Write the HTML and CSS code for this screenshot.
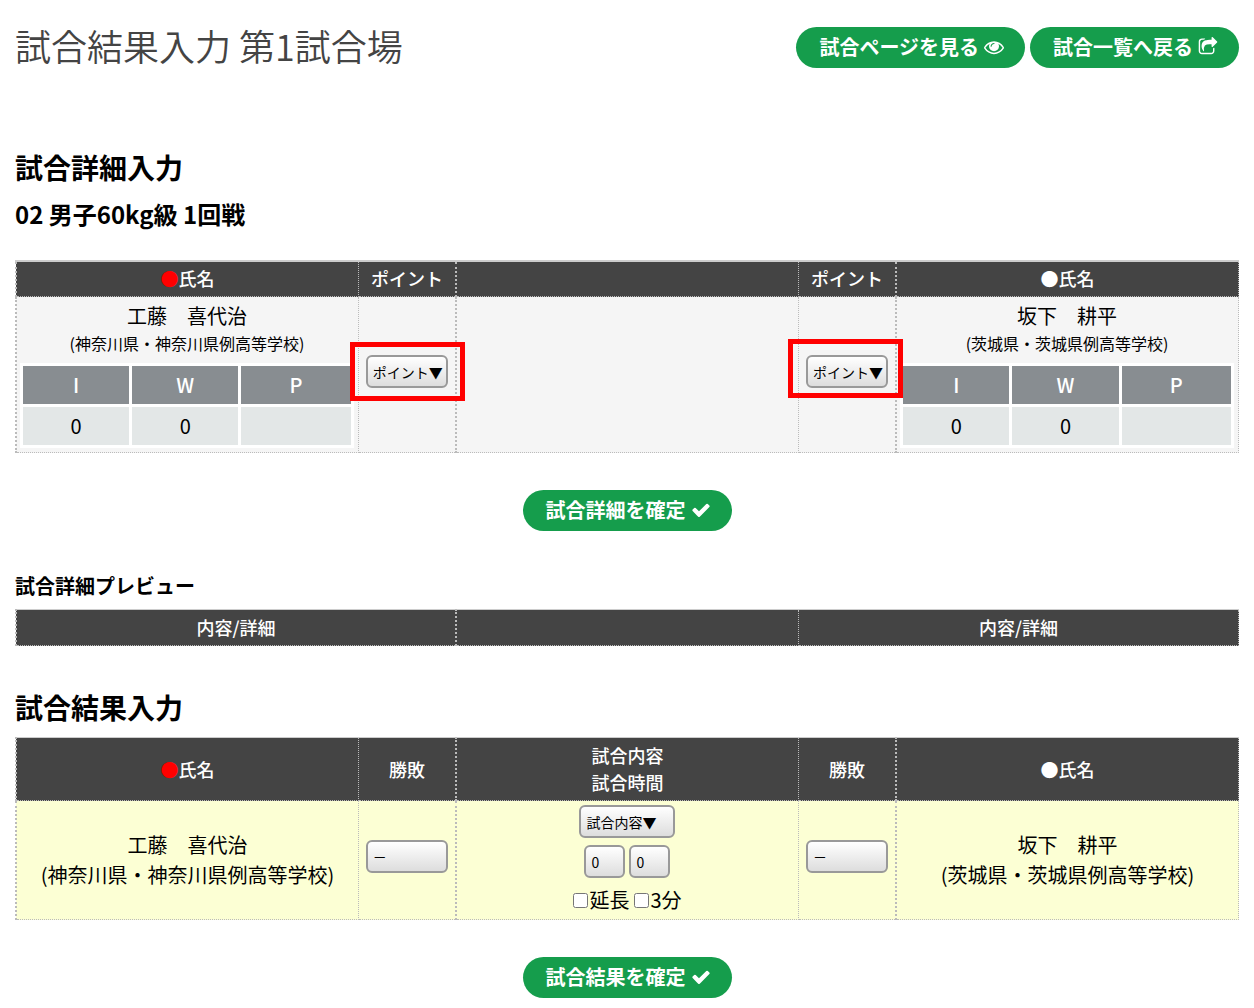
FILE: index.html
```html
<!DOCTYPE html>
<html lang="ja">
<head>
    <meta charset="UTF-8">
    <meta name="viewport" content="width=device-width, initial-scale=1.0">
    <title>試合結果入力 第1試合場</title>
    <link rel="stylesheet" href="styles.css">
</head>
<body>

    <!-- Page Header -->
    <header class="page-header">
        <h1>試合結果入力 第1試合場</h1>
        <nav class="header-links">
            <a href="#match" class="pill">試合ページを見る
                <svg class="icon" viewBox="0 0 1792 1792" aria-hidden="true"><path d="M1664 960q-152-236-381-353 61 104 61 225 0 185-131.500 316.500t-316.500 131.500-316.500-131.500-131.500-316.500q0-121 61-225-229 117-381 353 133 205 333.500 326.500t434.500 121.500 434.500-121.500 333.500-326.500zm-720-384q0-20-14-34t-34-14q-125 0-214.500 89.500t-89.500 214.500q0 20 14 34t34 14 34-14 14-34q0-86 61-147t147-61q20 0 34-14t14-34zm848 384q0 34-20 69-140 230-376.500 368.500t-499.500 138.500-499.500-139-376.500-368q-20-35-20-69t20-69q140-229 376.500-368t499.500-139 499.500 139 376.500 368q20 35 20 69z"/></svg>
            </a>
            <a href="#list" class="pill">試合一覧へ戻る
                <svg class="icon" viewBox="0 0 1792 1792" aria-hidden="true"><path d="M1472 989v259q0 119-84.500 203.500t-203.500 84.500h-832q-119 0-203.500-84.500t-84.500-203.500v-832q0-119 84.500-203.500t203.500-84.500h255q13 0 22.500 9.500t9.500 22.500q0 27-26 32-77 26-133 60-10 4-16 4h-112q-66 0-113 47t-47 113v832q0 66 47 113t113 47h832q66 0 113-47t47-113v-214q0-19 18-29 28-13 54-37 16-16 35-8 21 9 21 31zm237-496l-384 384q-18 19-45 19-12 0-25-5-39-17-39-59v-192h-160q-323 0-438 131-119 137-74 473 3 23-20 34-8 2-12 2-16 0-26-13-10-14-21-31t-39.500-68.500-49.500-99.500-38.500-114-17.500-122q0-49 3.500-91t14-90 28-88 47-81.500 68.500-74 94.500-61.500 124.500-48.500 159.500-30.500 196.500-11h160v-192q0-42 39-59 13-5 25-5 26 0 45 19l384 384q19 19 19 45t-19 45z"/></svg>
            </a>
        </nav>
    </header>

    <!-- Match Detail -->
    <form class="detail-form" id="match">
        <h2>試合詳細入力</h2>
        <h3>02 男子60kg級 1回戦</h3>
        <table class="match-table detail-table">
            <colgroup>
                <col class="col-wide"><col class="col-narrow"><col class="col-wide"><col class="col-narrow"><col class="col-wide">
            </colgroup>
            <thead>
                <tr>
                    <th><span class="red">●</span>氏名</th>
                    <th>ポイント</th>
                    <th></th>
                    <th>ポイント</th>
                    <th>●氏名</th>
                </tr>
            </thead>
            <tbody>
                <tr>
                    <td class="player">
                        <p>工藤　喜代治</p>
                        <p class="school">(神奈川県・神奈川県例高等学校)</p>
                        <table class="score">
                            <tr><th>I</th><th>W</th><th>P</th></tr>
                            <tr><td>0</td><td>0</td><td></td></tr>
                        </table>
                    </td>
                    <td class="point">
                        <div class="marked marked-red">
                            <select class="select select-full" aria-label="赤 ポイント"><option>ポイント▼</option></select>
                        </div>
                    </td>
                    <td></td>
                    <td class="point">
                        <div class="marked marked-white">
                            <select class="select select-full" aria-label="白 ポイント"><option>ポイント▼</option></select>
                        </div>
                    </td>
                    <td class="player">
                        <p>坂下　耕平</p>
                        <p class="school">(茨城県・茨城県例高等学校)</p>
                        <table class="score">
                            <tr><th>I</th><th>W</th><th>P</th></tr>
                            <tr><td>0</td><td>0</td><td></td></tr>
                        </table>
                    </td>
                </tr>
            </tbody>
        </table>
        <div class="submit">
            <button type="button" class="pill">試合詳細を確定
                <svg class="icon" viewBox="0 0 1792 1792" aria-hidden="true"><path d="M1671 566q0 40-28 68l-724 724-136 136q-28 28-68 28t-68-28l-136-136-362-362q-28-28-28-68t28-68l136-136q28-28 68-28t68 28l294 295 656-657q28-28 68-28t68 28l136 136q28 28 28 68z"/></svg>
            </button>
        </div>
    </form>

    <!-- Detail Preview -->
    <section class="preview">
        <h4>試合詳細プレビュー</h4>
        <table class="match-table preview-table">
            <colgroup>
                <col class="col-half"><col class="col-wide"><col class="col-half">
            </colgroup>
            <thead>
                <tr>
                    <th>内容/詳細</th>
                    <th></th>
                    <th>内容/詳細</th>
                </tr>
            </thead>
        </table>
    </section>

    <!-- Match Result -->
    <form class="result-form">
        <h2>試合結果入力</h2>
        <table class="match-table result-table">
            <colgroup>
                <col class="col-wide"><col class="col-narrow"><col class="col-wide"><col class="col-narrow"><col class="col-wide">
            </colgroup>
            <thead>
                <tr>
                    <th><span class="red">●</span>氏名</th>
                    <th>勝敗</th>
                    <th>試合内容<br>試合時間</th>
                    <th>勝敗</th>
                    <th>●氏名</th>
                </tr>
            </thead>
            <tbody>
                <tr>
                    <td>
                        <p>工藤　喜代治</p>
                        <p>(神奈川県・神奈川県例高等学校)</p>
                    </td>
                    <td>
                        <select class="select select-full" aria-label="赤 勝敗"><option>－</option></select>
                    </td>
                    <td>
                        <div class="fields">
                            <select class="select select-content" aria-label="試合内容"><option>試合内容▼</option></select>
                        </div>
                        <div class="fields">
                            <select class="select select-time" aria-label="分"><option>0</option></select>
                            <select class="select select-time" aria-label="秒"><option>0</option></select>
                        </div>
                        <div class="checks">
                            <label><input type="checkbox">延長</label>
                            <label><input type="checkbox">3分</label>
                        </div>
                    </td>
                    <td>
                        <select class="select select-full" aria-label="白 勝敗"><option>－</option></select>
                    </td>
                    <td>
                        <p>坂下　耕平</p>
                        <p>(茨城県・茨城県例高等学校)</p>
                    </td>
                </tr>
            </tbody>
        </table>
        <div class="submit">
            <button type="button" class="pill">試合結果を確定
                <svg class="icon" viewBox="0 0 1792 1792" aria-hidden="true"><path d="M1671 566q0 40-28 68l-724 724-136 136q-28 28-68 28t-68-28l-136-136-362-362q-28-28-28-68t28-68l136-136q28-28 68-28t68 28l294 295 656-657q28-28 68-28t68 28l136 136q28 28 28 68z"/></svg>
            </button>
        </div>
    </form>

</body>
</html>
```
FILE: styles.css
```css
* {
    margin: 0;
    padding: 0;
    box-sizing: border-box;
    font-family: "Noto Sans CJK JP", sans-serif;
}

body {
    padding: 20px 15px 10px;
    background: #fff;
    color: #000;
    font-size: 20px;
    line-height: 30px;
}

/* Page Header */
.page-header {
    display: flex;
    justify-content: space-between;
    align-items: center;
    margin-bottom: 72px;
}

h1 {
    font-size: 36px;
    font-weight: 350;
    line-height: 50px;
    padding-bottom: 4px;
    color: #444;
}

.header-links {
    display: flex;
    gap: 5px;
}

h2 {
    font-size: 28px;
    font-weight: 700;
    line-height: 42px;
}

h3 {
    font-size: 24px;
    font-weight: 700;
    line-height: 36px;
    margin: 8px 0 28px;
}

h4 {
    font-size: 20px;
    font-weight: 700;
    line-height: 30px;
    margin-bottom: 8px;
}

/* Green rounded buttons */
.pill {
    display: inline-flex;
    align-items: center;
    gap: 5px;
    padding: 5px 21px 6px 23px;
    border: none;
    border-radius: 21px;
    background: #159d4c;
    color: #fff;
    font-size: 20px;
    font-weight: 700;
    line-height: 30px;
    text-decoration: none;
    cursor: pointer;
}

.pill:hover {
    background: #128641;
}

.icon {
    width: 20px;
    height: 20px;
    fill: currentColor;
}

.submit {
    display: flex;
    justify-content: center;
    margin-top: 37px;
}

/* Tables */
.match-table {
    width: 100%;
    table-layout: fixed;
    border-collapse: collapse;
    border-top: 1px solid #ccc;
    text-align: center;
}

.detail-table {
    border-top-width: 2px;
}

.col-wide {
    width: 28%;
}

.col-narrow {
    width: 8%;
}

.col-half {
    width: 36%;
}

.match-table > * > tr > * {
    border-bottom: 1px dotted #bbb;
    border-left: 2px dotted #bbb;
    border-right: 1px dotted #bbb;
    padding: 4px 7px;
}

.match-table > * > tr > :nth-child(2),
.match-table > * > tr > :nth-child(4),
.preview-table > * > tr > :nth-child(3) {
    border-left-width: 1px;
}

.preview-table > * > tr > :nth-child(2) {
    border-left-width: 2px;
}

.match-table > thead > tr > th {
    background: #444;
    color: #fff;
    font-size: 18px;
    font-weight: 500;
    line-height: 27px;
}

.detail-table > thead > tr > th {
    padding-top: 3px;
}

.detail-table > tbody > tr > td {
    background: #f5f5f5;
}

.result-table > tbody > tr > td {
    background: #fcffd4;
}

.red {
    color: #f00;
}

/* Player cell with score */
.match-table > tbody > tr > .player {
    padding: 4px 4px 4px 3px;
}

.match-table > tbody > tr > .point {
    padding-bottom: 10px;
}

.school {
    font-size: 16px;
    line-height: 24px;
}

.score {
    width: 100%;
    margin-top: 8px;
    table-layout: fixed;
    border-spacing: 3px;
    background: #fff;
}

.score th {
    height: 38px;
    background: #888d91;
    color: #fff;
    font-weight: 500;
}

.score th:not(:last-child) {
    width: 33%;
}

.score td {
    height: 38px;
    background: #e3e7e7;
}

/* Dropdowns */
.select {
    appearance: none;
    height: 33px;
    padding-left: 5px;
    border: 2px solid #999;
    border-radius: 6px;
    background: linear-gradient(#fff, #ddd);
    color: #000;
    font-size: 14px;
}

.select-full {
    display: block;
    width: 100%;
    margin-bottom: 8px;
}

.select-content {
    width: 96px;
}

.select-time {
    width: 41px;
}

.fields {
    display: flex;
    justify-content: center;
    align-items: flex-start;
    gap: 4px;
    height: 40px;
}

.checks {
    display: flex;
    justify-content: center;
    gap: 5px;
}

.checks label {
    display: flex;
    align-items: center;
    gap: 1px;
}

.checks input {
    width: 15px;
    height: 15px;
}

/* Red frame over the point dropdowns */
.marked {
    position: relative;
}

.marked::after {
    content: "";
    position: absolute;
    border: 5px solid #f00;
    pointer-events: none;
}

.marked-red::after {
    inset: -13px -17px -13px -16px;
}

.marked-white::after {
    inset: -16px -15px -10px -18px;
}

.marked .select {
    margin-bottom: 0;
}

/* Sections */
.preview {
    margin-top: 40px;
}

.result-form {
    margin-top: 40px;
}

.result-form h2 {
    margin-bottom: 9px;
}
```
